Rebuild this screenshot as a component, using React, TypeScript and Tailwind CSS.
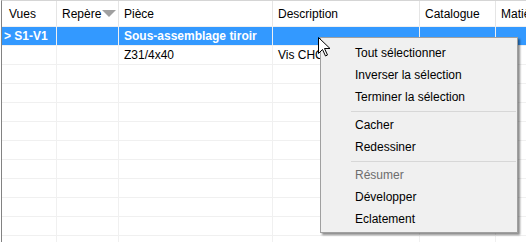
import React from "react";

const cols = [
  { w: "w-[55px]", head: "Vues", hp: "pl-[7px]" },
  { w: "w-[62px]", head: "Repère", hp: "pl-[5px]" },
  { w: "w-[154px]", head: "Pièce", hp: "pl-[5px]" },
  { w: "w-[147px]", head: "Description", hp: "pl-[5px]" },
  { w: "w-[76px]", head: "Catalogue", hp: "pl-[5px]" },
  { w: "w-[60px]", head: "Matière", hp: "pl-[5px]" },
];

function Row({ cells, selected }: { cells: string[]; selected?: boolean }) {
  return (
    <div className={`flex h-[19px] shrink-0 border-b border-[#f0f0f0] ${selected ? "bg-[#3399ff] text-white font-bold" : "text-black"}`}>
      {cols.map((c, i) => (
        <div
          key={i}
          className={`${c.w} shrink-0 h-full border-r border-[#f0f0f0] flex items-center overflow-hidden whitespace-nowrap ${i === 0 ? "pl-[2px]" : "pl-[5px]"}`}
        >
          {cells[i] ?? ""}
        </div>
      ))}
    </div>
  );
}

function MenuItem({ label, disabled }: { label: string; disabled?: boolean }) {
  return (
    <div className={`h-[22px] flex items-center pl-[34px] whitespace-nowrap ${disabled ? "text-[#6d6d6d]" : "text-black"}`}>
      {label}
    </div>
  );
}

function Sep() {
  return (
    <div className="h-[6px] flex items-center pl-[30px] pr-[1px]">
      <div className="h-px w-full bg-[#d7d7d7]" />
    </div>
  );
}

export default function App() {
  const empty = Array.from({ length: 10 });
  return (
    <div
      className="relative w-[526px] h-[242px] overflow-hidden bg-white text-[12px] leading-none"
      style={{ fontFamily: '"Liberation Sans", Arial, sans-serif' }}
    >
      <div className="h-full pl-px">
        <div className="h-full border-l border-[#828282] border-t border-t-[#d5d5d5] flex flex-col">
          {/* header */}
          <div className="flex h-[26px] shrink-0 border-b border-[#f0f0f0] bg-white">
            {cols.map((c, i) => (
              <div
                key={i}
                className={`${c.w} shrink-0 h-full border-r border-[#e5e5e5] flex items-center overflow-hidden whitespace-nowrap ${c.hp} text-black`}
              >
                {c.head}
                {i === 1 && (
                  <svg width="14" height="7" viewBox="0 0 14 7" className="ml-[1px]">
                    <path d="M0 0 L14 0 L7 7 Z" fill="#a0a0a0" />
                  </svg>
                )}
              </div>
            ))}
          </div>
          <Row cells={["> S1-V1", "", "Sous-assemblage tiroir", "", "", ""]} selected />
          <Row cells={["", "", "Z31/4x40", "Vis CHC M4x40", "", ""]} />
          {empty.map((_, i) => (
            <Row key={i} cells={[]} />
          ))}
        </div>
      </div>

      {/* context menu */}
      <div className="absolute left-[320px] top-[37px] w-[198px] h-[196px] bg-[#f0f0f0] border border-[#a0a0a0] pt-[4px] shadow-[2px_2px_2px_rgba(0,0,0,0.45)]">
        <MenuItem label="Tout sélectionner" />
        <MenuItem label="Inverser la sélection" />
        <MenuItem label="Terminer la sélection" />
        <Sep />
        <MenuItem label="Cacher" />
        <MenuItem label="Redessiner" />
        <Sep />
        <MenuItem label="Résumer" disabled />
        <MenuItem label="Développer" />
        <MenuItem label="Eclatement" />
      </div>

      {/* mouse cursor */}
      <svg className="absolute left-[318px] top-[37px]" width="13" height="20" viewBox="0 0 13 20">
        <path
          d="M0.5 0.5 L0.5 16.5 L4.5 12.5 L7.5 19 L9.5 18 L6.5 11.5 L12 11.5 Z"
          fill="white"
          stroke="black"
          strokeWidth="1"
          strokeLinejoin="miter"
        />
      </svg>
    </div>
  );
}
